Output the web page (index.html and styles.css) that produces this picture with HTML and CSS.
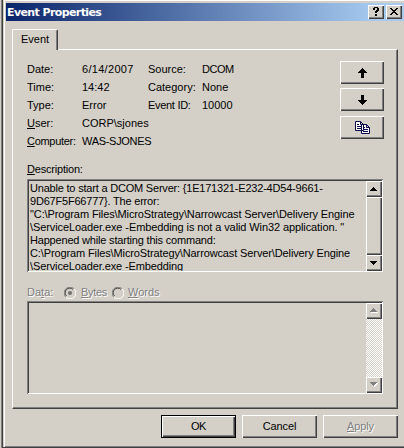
FILE: index.html
```html
<!DOCTYPE html>
<html lang="en">
<head>
<meta charset="utf-8">
<title>Event Properties</title>
<link rel="stylesheet" href="styles.css">
</head>
<body>
<div class="window">
  <header class="titlebar">
    <h1>Event Properties</h1>
    <button class="cap" aria-label="Help"><svg width="8" height="9" viewBox="0 0 8 9"><path d="M2 0h4v1h1v3h-1v1h-1v1h-2v-2h1v-1h1v-2h-2v2h-2v-2h1zM3 7h2v2h-2z"/></svg></button>
    <button class="cap" aria-label="Close"><svg width="8" height="7" viewBox="0 0 8 7"><path d="M0 0h2v1h1v1h2v-1h1v-1h2v1h-1v1h-1v1h-1v1h1v1h1v1h1v1h-2v-1h-1v-1h-2v1h-1v1h-2v-1h1v-1h1v-1h1v-1h-1v-1h-1v-1h-1z"/></svg></button>
  </header>
  <div class="tab">Event</div>
  <main class="page">
    <section class="top">
      <div class="fields">
        <span>Date:</span><span class="date">6/14/2007</span><span>Source:</span><span class="dcom">DCOM</span>
        <span>Time:</span><span>14:42</span><span>Category:</span><span>None</span>
        <span>Type:</span><span>Error</span><span class="eid">Event ID:</span><span>10000</span>
        <span><u>U</u>ser:</span><span class="wide">CORP\sjones</span>
        <span class="comp"><u>C</u>omputer:</span><span class="wide was">WAS-SJONES</span>
      </div>
      <div class="nav">
        <button class="btn" aria-label="Previous"><svg width="9" height="10" viewBox="0 0 9 10"><path d="M4 0h1v1h1v1h1v1h1v1h1v1h-3v5h-3v-5h-3v-1h1v-1h1v-1h1v-1h1z"/></svg></button>
        <button class="btn" aria-label="Next"><svg width="9" height="10" viewBox="0 0 9 10"><path d="M3 0h3v5h3v1h-1v1h-1v1h-1v1h-1v1h-1v-1h-1v-1h-1v-1h-1v-1h-1v-1h3z"/></svg></button>
        <button class="btn copy" aria-label="Copy"><svg width="15" height="13" viewBox="0 0 15 13"><g fill="#fff" stroke="#0a0a50"><path d="M.5.5h5l3 3v6h-8zM5.5.5v3h3M6.5 3.5h5l3 3v6h-8zM11.5 3.5v3h3"/><path d="M2 3.5h2M2 5.5h4M2 7.5h4M8 6.5h2M8 8.5h5M8 10.5h5"/></g></svg></button>
      </div>
    </section>
    <div class="desc-label"><u>D</u>escription:</div>
    <div class="box">
      <div class="text">
        <p class="l1">Unable to start a DCOM Server: {1E171321-E232-4D54-9661-</p>
        <p class="l2">9D67F5F66777}. The error:</p>
        <p class="l3">"C:\Program Files\MicroStrategy\Narrowcast Server\Delivery Engine</p>
        <p class="l4">\ServiceLoader.exe -Embedding is not a valid Win32 application. "</p>
        <p class="l5">Happened while starting this command:</p>
        <p class="l6">C:\Program Files\MicroStrategy\Narrowcast Server\Delivery Engine</p>
        <p class="l7">\ServiceLoader.exe -Embedding</p>
      </div>
      <div class="scroll">
        <span class="sb"><svg width="7" height="4" viewBox="0 0 7 4"><path d="M3 0h1v1h1v1h1v1h1v1h-7v-1h1v-1h1v-1h1z"/></svg></span>
        <span class="sb thumb"></span>
        <span class="sb"><svg width="7" height="4" viewBox="0 0 7 4"><path d="M0 0h7v1h-1v1h-1v1h-1v1h-1v-1h-1v-1h-1v-1h-1z"/></svg></span>
      </div>
    </div>
    <div class="data off">
      <span class="dl">Da<u>t</u>a:</span>
      <svg class="radio" width="12" height="12" viewBox="0 0 12 12"><g fill="none"><path d="M1.8 10.2A5.5 5.5 0 0 1 10.2 1.8" stroke="#808080"/><path d="M10.2 1.8A5.5 5.5 0 0 1 1.8 10.2" stroke="#fff"/><path d="M2.5 9A4.5 4.5 0 0 1 9 2.5" stroke="#404040"/></g><circle cx="6" cy="6" r="2" fill="#707070"/></svg>
      <span class="bytes"><u>B</u>ytes</span>
      <svg class="radio" width="12" height="12" viewBox="0 0 12 12"><g fill="none"><path d="M1.8 10.2A5.5 5.5 0 0 1 10.2 1.8" stroke="#808080"/><path d="M10.2 1.8A5.5 5.5 0 0 1 1.8 10.2" stroke="#fff"/><path d="M2.5 9A4.5 4.5 0 0 1 9 2.5" stroke="#404040"/></g></svg>
      <span class="words"><u>W</u>ords</span>
    </div>
    <div class="box">
      <div class="text"></div>
      <div class="scroll dither">
        <span class="sb"><svg width="8" height="5" viewBox="0 0 8 5"><path fill="#fff" d="M4 1h1v1h1v1h1v1h1v1h-7v-1h1v-1h1v-1h1z"/><path fill="#808080" d="M3 0h1v1h1v1h1v1h1v1h-7v-1h1v-1h1v-1h1z"/></svg></span>
        <span class="gap"></span>
        <span class="sb"><svg width="8" height="5" viewBox="0 0 8 5"><path fill="#fff" d="M1 1h7v1h-1v1h-1v1h-1v1h-1v-1h-1v-1h-1v-1h-1z"/><path fill="#808080" d="M0 0h7v1h-1v1h-1v1h-1v1h-1v-1h-1v-1h-1v-1h-1z"/></svg></span>
      </div>
    </div>
  </main>
  <footer class="actions">
    <button class="btn ok">OK</button>
    <button class="btn">Cancel</button>
    <button class="btn off"><span><u>A</u>pply</span></button>
  </footer>
</div>
</body>
</html>
```
FILE: styles.css
```css
* { box-sizing: border-box; }
body {
  margin: 0; width: 404px; height: 448px; overflow: hidden;
  background: #d4d0c8; color: #000;
  font: 11px/13px "Liberation Sans", Arial, sans-serif;
}
h1, p { margin: 0; }
u { text-decoration: underline; text-underline-offset: 1px; text-decoration-thickness: 1px; }
svg { display: block; flex: none; }
button { font: inherit; color: inherit; padding: 0; border: 0; background: #d4d0c8; }
.window {
  height: 448px; margin-left: 2px; padding: 1px 0 0 1px;
  border-left: 1px solid #404040; border-bottom: 1px solid #404040;
  box-shadow: inset 1px 0 #d4d0c8, inset 2px 0 #fff, inset 0 1px #fff, inset 0 -1px #808080, -1px 0 #808080;
}
.titlebar {
  display: flex; align-items: center; height: 18px; margin: 2px 0 0 2px; padding: 0 2px 0 1px;
  background: linear-gradient(90deg, #0a246a, #a6caf0 93%);
}
.titlebar h1 {
  flex: 1; padding-top: 2px; color: #fff; white-space: nowrap;
  font: bold 11px/16px "DejaVu Sans", Verdana, sans-serif; letter-spacing: -0.6px;
}
.cap, .btn, .sb {
  display: flex; align-items: center; justify-content: center;
  box-shadow: inset 1px 1px #fff, inset -1px -1px #404040, inset -2px -2px #808080;
}
.cap { width: 16px; height: 14px; margin-left: 2px; padding: 0 1px 1px 0; }
.tab {
  width: 46px; height: 21px; margin: 8px 0 -1px 8px; padding: 3px 0 0 8px;
  position: relative; background: #d4d0c8;
  border-left: 1px solid #fff; border-top: 1px solid #fff; border-right: 1px solid #404040;
  border-radius: 2px 2px 0 0; box-shadow: inset -1px 0 #808080;
}
.page {
  width: 386px; height: 360px; margin-left: 8px; padding: 11px 12px 0 14px;
  border: 1px solid; border-color: #fff #404040 #404040 #fff;
  box-shadow: inset -1px -1px #808080;
}
.top { display: flex; justify-content: space-between; height: 102px; }
.fields {
  display: grid; grid-template-columns: 55px 66px 54px 60px; grid-auto-rows: 18px;
  white-space: nowrap; line-height: 18px; height: 90px; margin-top: -1px;
}
.date { letter-spacing: .3px; }
.dcom { letter-spacing: -.5px; }
.eid, .comp, .was { letter-spacing: -.3px; }
.wide { grid-column: 2 / 5; }
.nav { display: flex; flex-direction: column; gap: 4px; margin-right: 1px; }
.nav .btn { width: 44px; height: 23px; flex: none; }
.nav .copy { margin-top: 1px; }
.desc-label { height: 16px; letter-spacing: -.2px; }
.box {
  display: flex; width: 356px; height: 93px; padding: 2px 1px 1px 2px;
  box-shadow: inset 1px 1px #808080, inset -1px -1px #fff, inset 2px 2px #404040;
}
.text { flex: 1; min-width: 0; white-space: nowrap; padding: 1px 0 0 1px; }
.l1 { letter-spacing: -.2px; }
.l2 { letter-spacing: -.2px; }
.l3 { letter-spacing: -.11px; }
.l4 { letter-spacing: -.1px; }
.l5 { letter-spacing: -.19px; }
.l6, .l7 { letter-spacing: -.12px; }
.l7 { height: 11px; overflow: hidden; }
.scroll { display: flex; flex-direction: column; width: 16px; }
.sb { height: 16px; flex: none; padding: 0 1px 1px 0; }
.thumb { flex: 1; }
.gap { flex: 1; }
.dither { background: repeating-conic-gradient(#fff 0 25%, #d4d0c8 0 50%) 0 0 / 2px 2px; }
.dither .sb { background: #d4d0c8; }
.off { color: #808080; text-shadow: 1px 1px #fff; }
.data { display: flex; align-items: center; height: 29px; padding-top: 12px; }
.dl { width: 37px; }
.bytes { width: 30px; margin-left: 5px; margin-right: 1px; letter-spacing: -.3px; }
.words { margin-left: 4px; }
.actions { display: flex; gap: 6px; margin: 6px 0 0 157px; }
.actions .btn { width: 75px; height: 23px; letter-spacing: -.1px; }
.actions .ok { border: 1px solid #000; letter-spacing: -.5px; }
```
